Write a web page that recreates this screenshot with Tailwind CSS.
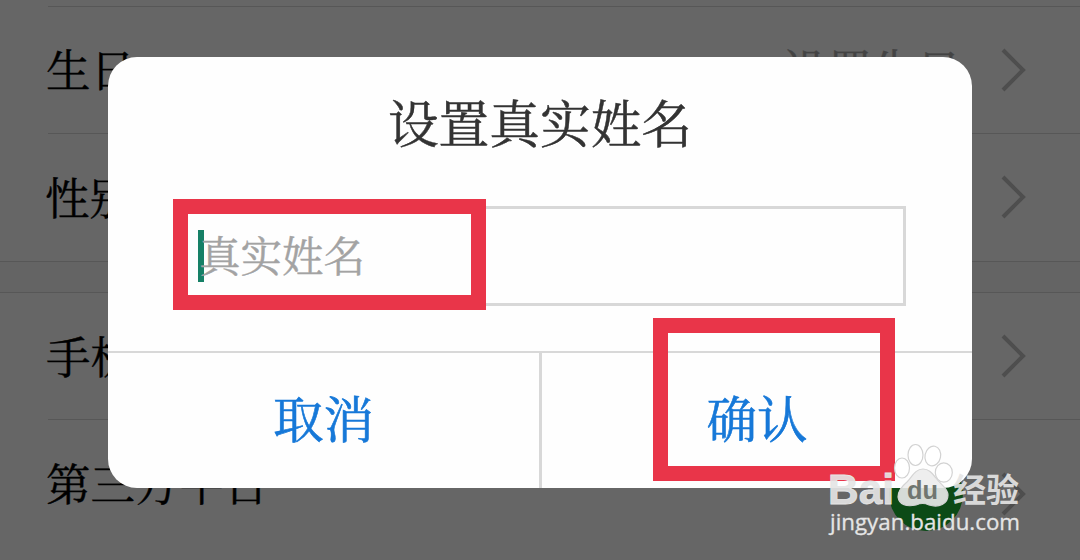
<!DOCTYPE html>
<html lang="zh-CN">
<head>
<meta charset="utf-8">
<title>设置真实姓名</title>
<script src="https://cdn.jsdelivr.net/npm/@tailwindcss/browser@4"></script>
</head>
<body class="relative h-[560px] w-[1080px] overflow-hidden bg-[#666666] font-['Noto_Serif_CJK_SC','Source_Han_Serif_SC','Noto_Sans_CJK_SC',serif] font-normal">
<main class="flex flex-col pt-[6px] text-[44.5px] leading-none text-black [-webkit-text-stroke:0.4px_currentColor]">
  <section class="flex flex-col">
    <div class="ml-12 flex h-[127px] items-center justify-between border-t border-[#575757] pr-[53px]">
      <span class="-ml-[2px] pb-[3px]">生日</span>
      <div class="flex items-center gap-[40px] text-[#434343]"><span class="pb-[3px]">设置生日</span>
        <svg class="h-[44px] w-[26px]" viewBox="0 0 26 44" fill="none" stroke="#4e4e4e" stroke-width="4"><path d="M2 2 22 22 2 42"/></svg></div>
    </div>
    <div class="ml-12 flex h-[128px] items-center justify-between border-t border-[#575757] pr-[53px] pb-0.5">
      <span class="-ml-[3px]">性别</span>
      <svg class="h-[44px] w-[26px]" viewBox="0 0 26 44" fill="none" stroke="#4e4e4e" stroke-width="4"><path d="M2 2 22 22 2 42"/></svg>
    </div>
  </section>
  <div class="h-8 border-y border-[#575757] bg-[#646464]"></div>
  <section class="flex flex-col">
    <div class="ml-12 flex h-[126px] items-center justify-between pr-[53px]">
      <span class="-ml-[2px] pb-px">手机号</span>
      <svg class="h-[44px] w-[26px]" viewBox="0 0 26 44" fill="none" stroke="#4e4e4e" stroke-width="4"><path d="M2 2 22 22 2 42"/></svg>
    </div>
    <div class="ml-12 flex h-[128px] items-center justify-between border-t border-[#575757] pr-[53px]">
      <span class="-ml-[2px] pb-[3px]">第三方平台</span>
      <div class="flex items-center gap-[38px]">
        <span class="mt-5 size-[74px] rounded-full bg-[#0c4a16]"></span>
        <svg class="mt-5 h-[44px] w-[26px]" viewBox="0 0 26 44" fill="none" stroke="#4e4e4e" stroke-width="4"><path d="M2 2 22 22 2 42"/></svg>
      </div>
    </div>
  </section>
</main>

<div class="absolute left-[108px] top-[57px] flex h-[431px] w-[864px] flex-col overflow-hidden rounded-[29px] bg-[#fefefe]">
  <h1 class="mt-[38px] text-center text-[50.7px] leading-[54px] text-[#333333] [-webkit-text-stroke:0.5px_currentColor]">设置真实姓名</h1>
  <div class="ml-[66px] mt-[57px] flex h-[100px] w-[732px] items-center border-[3px] border-[#d8d8d8] pl-[21px]">
    <span class="h-[52px] w-[6px] bg-[#168066]"></span>
    <span class="-ml-[5px] pb-0.5 text-[41.5px] leading-none text-[#a3a3a3] [-webkit-text-stroke:0.4px_currentColor]">真实姓名</span>
  </div>
  <div class="mt-[45px] flex h-[137px] border-t-2 border-[#d8d8d8] text-[50.5px] leading-none text-[#1678d8] [-webkit-text-stroke:0.6px_currentColor]">
    <div class="flex w-[431px] items-center justify-center pb-[8px]">取消</div>
    <div class="w-[3px] bg-[#d8d8d8]"></div>
    <div class="flex w-[430px] items-center justify-center pb-[8px]">确认</div>
  </div>
</div>

<div class="absolute left-[173px] top-[199px] h-[111px] w-[313px] border-[15px] border-[#e93549]"></div>
<div class="absolute left-[653px] top-[318px] h-[163px] w-[242px] border-[15px] border-[#e93549]"></div>

<svg class="absolute left-[820px] top-[435px]" width="215" height="110" viewBox="0 0 215 110">
  <g fill="#ffffff" fill-opacity=".75" stroke="#d2d2d2" stroke-width="1.2">
    <ellipse cx="82" cy="33" rx="7.500" ry="10"/>
    <ellipse cx="95.500" cy="20" rx="7.500" ry="10.500"/>
    <ellipse cx="112.800" cy="21" rx="7.800" ry="10" transform="rotate(12 112.800 21)"/>
    <ellipse cx="123.800" cy="37.500" rx="8.500" ry="9.700"/>
  </g>
  <path d="M103 34C95 34 92 42 87 47C81 52 78 56 78 62C79 70 87 72 96 70Q103 67 109 70C119 73 128 69 128 60C128 53 120 49 116 43C112 38 109 34 103 34Z" fill="#ececec" fill-opacity=".9" stroke="#d4d4d4" stroke-width="1.200"/>
  <g font-family="Liberation Sans, sans-serif" font-weight="700">
    <text x="8" y="69" font-size="42" textLength="66" lengthAdjust="spacingAndGlyphs" fill="#e5e5e5" fill-opacity=".92" stroke="#e5e5e5" stroke-width=".8">Bai</text>
    <text x="87" y="64" font-size="25" textLength="31" lengthAdjust="spacingAndGlyphs" fill="#707670">du</text>
  </g>
  <text x="133" y="67" font-family="Noto Sans CJK SC, sans-serif" font-weight="700" font-size="33" textLength="66" lengthAdjust="spacingAndGlyphs" fill="#e5e5e5" fill-opacity=".92">经验</text>
  <text x="10" y="95" font-family="Open Sans, Noto Sans, sans-serif" font-weight="400" font-size="22" textLength="190" lengthAdjust="spacingAndGlyphs" fill="#e5e5e5" stroke="#e5e5e5" stroke-width=".3">jingyan.baidu.com</text>
</svg>
</body>
</html>
